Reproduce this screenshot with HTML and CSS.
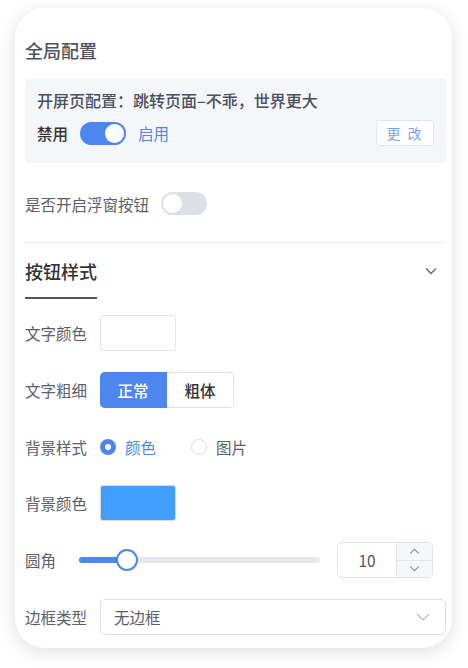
FILE: index.html
```html
<!DOCTYPE html>
<html lang="zh-CN">
	<head>
		<meta charset="UTF-8" />
		<meta name="viewport" content="width=device-width, initial-scale=1.0" />
		<title>全局配置</title>
		<link rel="stylesheet" href="styles.css">
	</head>
	<body>
		<div class="card">
			<div class="title">全局配置</div>
			<div class="splash">
				<div class="splash-text">开屏页配置：跳转页面–不乖，世界更大</div>
				<div class="splash-row">
					<span class="off-label">禁用</span>
					<span class="switch on"><span class="knob"></span></span>
					<span class="on-label">启用</span>
					<button class="change-btn">更 改</button>
				</div>
			</div>
			<div class="float-row">
				<span class="label">是否开启浮窗按钮</span>
				<span class="switch"><span class="knob"></span></span>
			</div>
			<div class="divider"></div>
			<div class="section-head">
				<div class="tab">按钮样式</div>
				<svg class="chev" viewBox="0 0 12 8" width="12" height="8">
					<path d="M1 1.5 L6 6.5 L11 1.5" fill="none" stroke="#666" stroke-width="1.3" />
				</svg>
			</div>
			<div class="form">
				<div class="row">
					<span class="label">文字颜色</span>
					<span class="swatch white"></span>
				</div>
				<div class="row">
					<span class="label">文字粗细</span>
					<div class="segment">
						<span class="seg active">正常</span>
						<span class="seg">粗体</span>
					</div>
				</div>
				<div class="row">
					<span class="label">背景样式</span>
					<label class="radio checked"><span class="dot"></span>颜色</label>
					<label class="radio"><span class="dot"></span>图片</label>
				</div>
				<div class="row">
					<span class="label">背景颜色</span>
					<span class="swatch blue"></span>
				</div>
				<div class="row">
					<span class="label short">圆角</span>
					<div class="slider">
						<div class="track"><div class="fill" style="width: 20%"></div></div>
						<span class="thumb" style="left: 20%"></span>
					</div>
					<div class="number">
						<span class="num-value">10</span>
						<div class="num-arrows">
							<span class="arrow">
								<svg viewBox="0 0 12 8" width="11" height="7"><path d="M1 6.5 L6 1.5 L11 6.5" fill="none" stroke="#8a8f99" stroke-width="1.2" /></svg>
							</span>
							<span class="arrow">
								<svg viewBox="0 0 12 8" width="11" height="7"><path d="M1 1.5 L6 6.5 L11 1.5" fill="none" stroke="#8a8f99" stroke-width="1.2" /></svg>
							</span>
						</div>
					</div>
				</div>
				<div class="row">
					<span class="label">边框类型</span>
					<div class="select">
						<span>无边框</span>
						<svg viewBox="0 0 14 8" width="14" height="8">
							<path d="M1 1 L7 7 L13 1" fill="none" stroke="#b4b8c0" stroke-width="1.2" />
						</svg>
					</div>
				</div>
			</div>
		</div>
	</body>
</html>
```

FILE: styles.css
```css
body {
	margin: 0;
	padding: 8px 0 20px 15px;
	background: #fff;
	font-family: 'Noto Sans CJK SC', 'Noto Sans', sans-serif;
}
.card {
	box-sizing: border-box;
	width: 437px;
	height: 640px;
	padding: 30px 6px 0 10px;
	background: #fff;
	border-radius: 30px;
	box-shadow: 0 4px 18px rgba(0, 0, 0, 0.13);
}
.title {
	height: 24px;
	line-height: 24px;
	font-size: 18px;
	font-weight: 500;
	color: #4d5363;
}
.splash {
	margin-top: 17px;
	height: 84px;
	box-sizing: border-box;
	padding: 10px 12px 0 12px;
	background: #f5f6fa;
	border-radius: 4px;
}
.splash-text {
	height: 22px;
	line-height: 22px;
	font-size: 16px;
	font-weight: 500;
	color: #4b5060;
}
.splash-row {
	display: flex;
	align-items: center;
	margin-top: 9px;
	height: 26px;
}
.off-label {
	font-size: 15.5px;
	font-weight: 500;
	color: #333;
	margin-right: 12px;
}
.on-label {
	font-size: 15.5px;
	color: #4e86f0;
	margin-left: 12px;
}
.switch {
	position: relative;
	display: inline-block;
	width: 46px;
	height: 23px;
	border-radius: 12px;
	background: #dcdfe6;
}
.switch .knob {
	position: absolute;
	top: 2px;
	left: 2px;
	width: 19px;
	height: 19px;
	border-radius: 50%;
	background: #fff;
}
.switch.on {
	background: #4e86f0;
}
.switch.on .knob {
	left: 25px;
}
.change-btn {
	margin-left: auto;
	width: 58px;
	height: 26px;
	padding: 0;
	border: 1px solid #e0e4ec;
	border-radius: 4px;
	background: #fff;
	color: #7ba4ee;
	font-family: inherit;
	font-size: 14px;
	letter-spacing: 2px;
}
.float-row {
	display: flex;
	align-items: center;
	margin-top: 29px;
	height: 23px;
}
.float-row .label {
	margin-right: 12px;
}
.label {
	font-size: 15.5px;
	color: #5c6068;
	white-space: nowrap;
}
.divider {
	margin-top: 27px;
	height: 1px;
	background: #eceef3;
}
.section-head {
	display: flex;
	justify-content: space-between;
	align-items: flex-start;
	margin-top: 14px;
	padding-right: 9px;
}
.tab {
	width: 72px;
	height: 40px;
	line-height: 28px;
	font-size: 18px;
	font-weight: 500;
	color: #333;
	border-bottom: 2px solid #555;
	white-space: nowrap;
}
.chev {
	margin-top: 10px;
}
.form {
	margin-top: 16px;
}
.row {
	display: flex;
	align-items: center;
	height: 36px;
	margin-bottom: 20.8px;
}
.row .label {
	width: 75px;
}
.row .label.short {
	width: 54px;
}
.swatch {
	box-sizing: border-box;
	width: 76px;
	height: 36px;
	border-radius: 3px;
}
.swatch.white {
	border: 1px solid #e3e4e8;
	background: #fff;
}
.swatch.blue {
	border: 1px solid #d9dbe0;
	background: #409eff;
}
.segment {
	display: flex;
	height: 36px;
}
.seg {
	box-sizing: border-box;
	width: 67px;
	display: flex;
	align-items: center;
	justify-content: center;
	font-size: 15.5px;
	font-weight: 500;
	color: #333;
	border: 1px solid #dde0e6;
	border-left: none;
	border-radius: 0 5px 5px 0;
}
.seg.active {
	background: #4e86f0;
	border-color: #4e86f0;
	color: #fff;
	border-radius: 5px 0 0 5px;
}
.radio {
	display: flex;
	align-items: center;
	font-size: 15.5px;
	color: #5c6068;
	width: 91px;
}
.radio .dot {
	box-sizing: border-box;
	width: 16px;
	height: 16px;
	margin-right: 9px;
	border-radius: 50%;
	border: 1px solid #dcdfe6;
	background: #fff;
}
.radio.checked {
	color: #4e86f0;
}
.radio.checked .dot {
	border: 5px solid #4e86f0;
}
.slider {
	position: relative;
	flex: 1;
	height: 24px;
	display: flex;
	align-items: center;
}
.track {
	width: 100%;
	height: 6px;
	border-radius: 3px;
	background: #e5e8ee;
}
.fill {
	height: 100%;
	border-radius: 3px;
	background: #4e86f0;
}
.thumb {
	position: absolute;
	top: 1px;
	box-sizing: border-box;
	width: 22px;
	height: 22px;
	margin-left: -11px;
	border-radius: 50%;
	border: 2px solid #4e86f0;
	background: #fff;
}
.number {
	box-sizing: border-box;
	display: flex;
	width: 96px;
	height: 36px;
	margin: 0 13px 0 17px;
	border: 1px solid #e0e3e9;
	border-radius: 5px;
	overflow: hidden;
}
.num-value {
	flex: 1;
	display: flex;
	align-items: center;
	justify-content: center;
	font-size: 15.5px;
	color: #555;
}
.num-arrows {
	width: 35px;
	display: flex;
	flex-direction: column;
	border-left: 1px solid #e0e3e9;
	background: #f5f7fa;
}
.arrow {
	flex: 1;
	display: flex;
	align-items: center;
	justify-content: center;
}
.arrow + .arrow {
	border-top: 1px solid #e0e3e9;
}
.select {
	box-sizing: border-box;
	flex: 1;
	height: 36px;
	display: flex;
	align-items: center;
	justify-content: space-between;
	padding: 0 15px 0 13px;
	border: 1px solid #dde0e6;
	border-radius: 5px;
	font-size: 15.5px;
	color: #5c6068;
}
```
